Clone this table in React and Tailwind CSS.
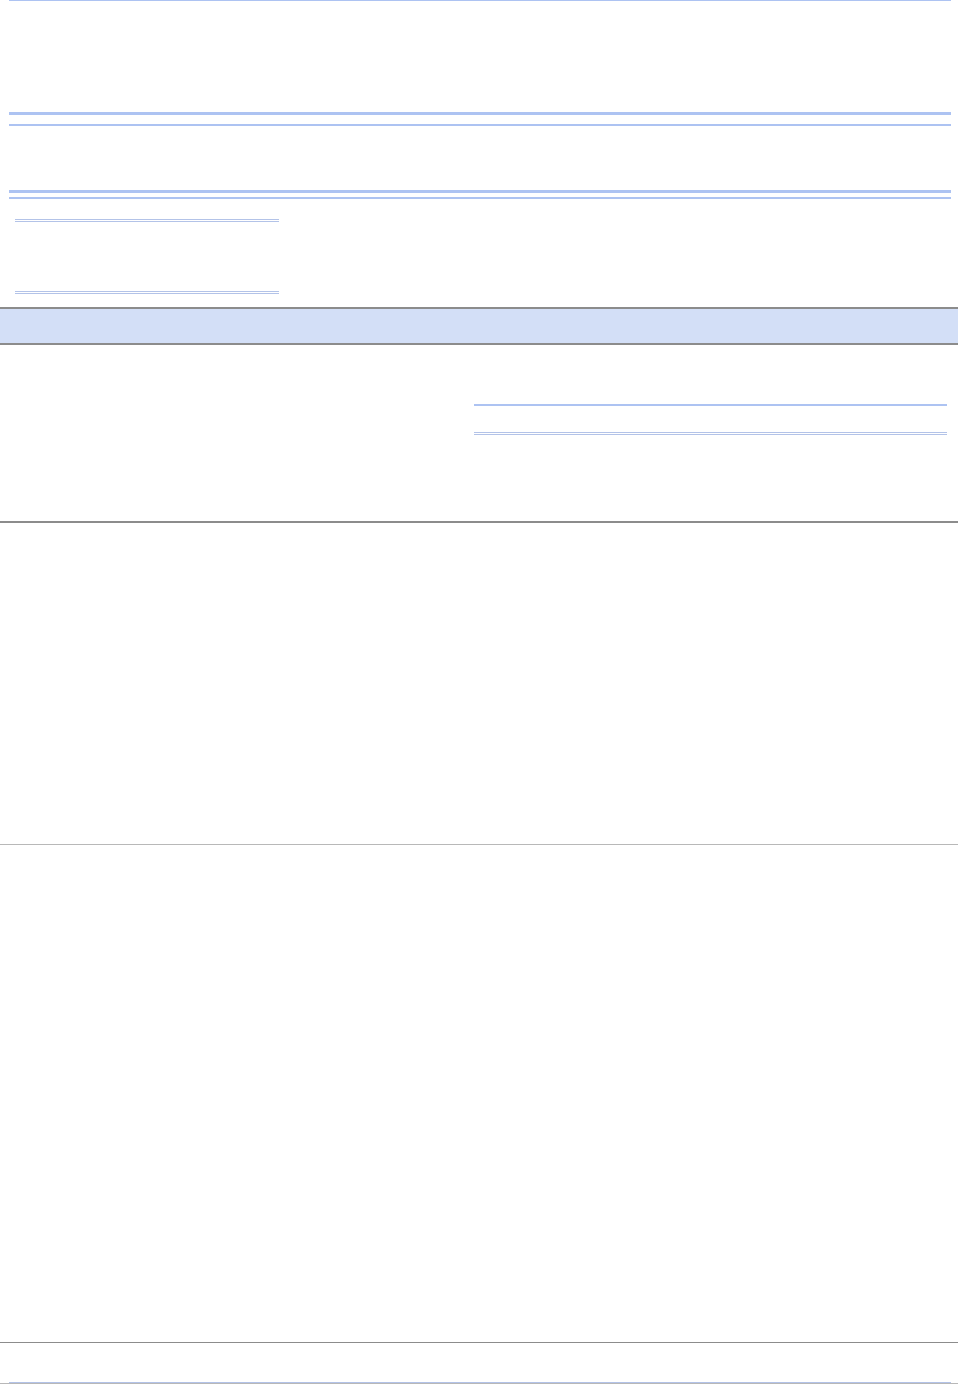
export default function App() {
  return (
    <div className="min-h-screen bg-white font-['Liberation_Sans',sans-serif]">
      {/* Header rules */}
      <div className="px-[9px]">
        <div className="h-px w-[942px] bg-[#adc3f2]" />
        <div className="mt-[111px] h-[3px] w-[942px] bg-[#adc3f2]" />
        <div className="mt-[9px] h-[2px] w-[942px] bg-[#adc3f2]" />
        <div className="mt-[64px] h-[3px] w-[942px] bg-[#adc3f2]" />
        <div className="mt-[4px] h-[2px] w-[942px] bg-[#adc3f2]" />
      </div>

      {/* Left small field */}
      <div className="px-[15px]">
        <div className="mt-[20px] h-[3px] w-[264px] border-y border-[#b3c3e8]" />
        <div className="mt-[69px] h-[3px] w-[264px] border-y border-[#b3c3e8]" />
      </div>

      {/* Band */}
      <div className="mt-[13px] h-[38px] border-y-2 border-[#8c8c8c] bg-[#d3dff7]" />

      {/* Two column section */}
      <div className="grid grid-cols-[474px_1fr]">
        <div />
        <div className="w-[473px]">
          <div className="mt-[59px] h-[2px] bg-[#adc3f2]" />
          <div className="mt-[26px] h-[3px] border-y border-[#b3c3e8]" />
        </div>
      </div>
      <div className="mt-[86px] h-[2px] bg-[#8c8c8c]" />

      {/* Lower sections */}
      <div className="mt-[321px] h-px bg-[#b8b8b8]" />
      <div className="mt-[497px] h-px bg-[#8c8c8c]" />
      <div className="mt-[39px] px-[9px]">
        <div className="h-px w-[942px] bg-[#b3c3e8]" />
      </div>
      <div className="h-px bg-[#b8b8b8]" />
    </div>
  )
}
